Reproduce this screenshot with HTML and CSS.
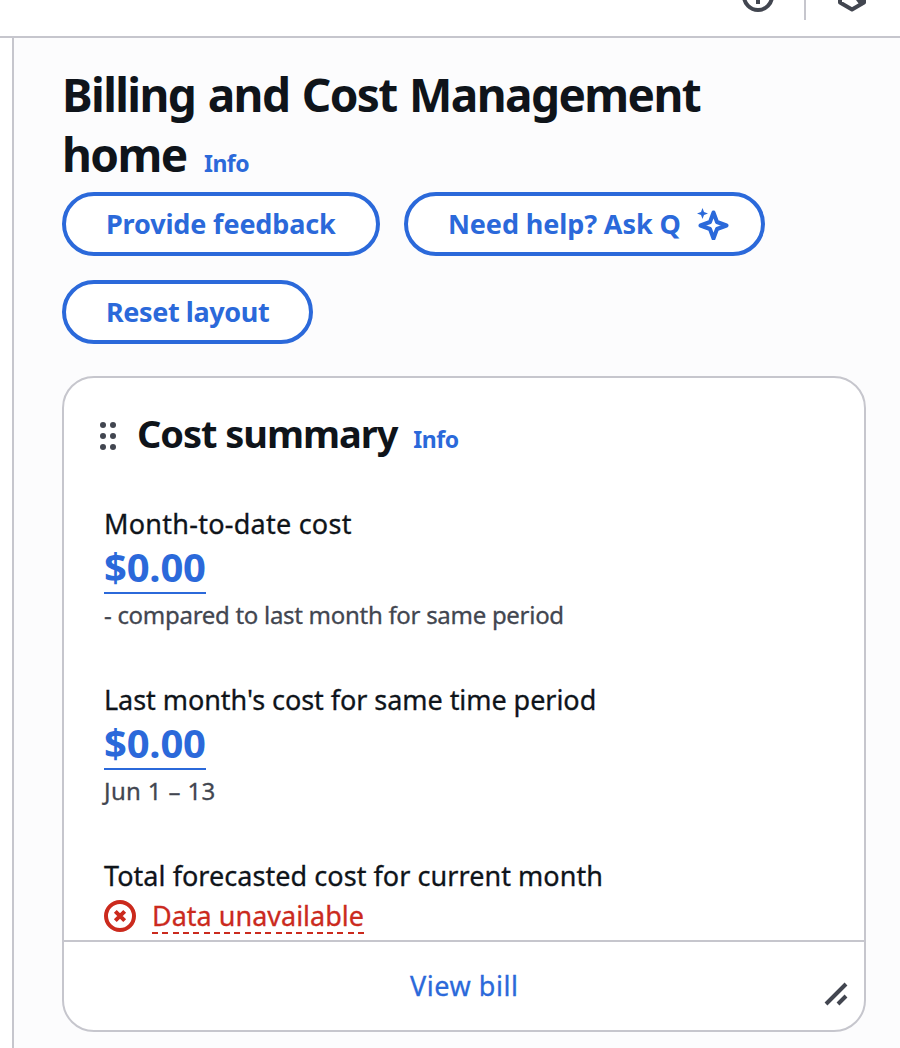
FILE: index.html
```html
<!DOCTYPE html>
<html lang="en">
<head>
<meta charset="utf-8">
<title>Billing and Cost Management</title>
<link rel="stylesheet" href="styles.css">
</head>
<body>
<header class="topbar">
  <svg class="help-icon" width="32" height="32" viewBox="0 0 32 32"><circle cx="16" cy="16" r="14" fill="none" stroke="currentColor" stroke-width="4"/><path d="M16 14v10" stroke="currentColor" stroke-width="4"/></svg>
  <span class="divider"></span>
  <svg class="settings-icon" width="32" height="32" viewBox="0 0 32 32"><path d="M16 3 4 9.500V22.500l12 7 12-7V9.500Z" fill="none" stroke="currentColor" stroke-width="4" stroke-linejoin="round"/><path d="M20 20l6-5v8l-3 1z" fill="currentColor"/></svg>
</header>
<div class="shell">
  <aside class="rail"></aside>
  <main class="content">
    <h1 class="title"><span class="title-text">Billing and Cost Management home</span> <a class="info">Info</a></h1>
    <div class="actions">
      <button class="btn feedback">Provide feedback</button>
      <button class="btn ask"><span>Need help? Ask Q</span><svg class="spark" width="32" height="32" viewBox="0 0 32 32"><path d="M16.500 4.500 20 14 29.500 17.500 20 21 16.500 30.500 13 21 3.500 17.500 13 14Z" fill="none" stroke="currentColor" stroke-width="4" stroke-linejoin="round"/><path d="M5.500 0 7 4 11 5.500 7 7 5.500 11 4 7 0 5.500 4 4Z" fill="currentColor"/></svg></button>
      <button class="btn reset">Reset layout</button>
    </div>
    <section class="card">
      <div class="card-head">
        <svg class="grip" width="16" height="28" viewBox="0 0 16 28" fill="currentColor"><circle cx="3" cy="3" r="3"/><circle cx="13" cy="3" r="3"/><circle cx="3" cy="14" r="3"/><circle cx="13" cy="14" r="3"/><circle cx="3" cy="25" r="3"/><circle cx="13" cy="25" r="3"/></svg>
        <h2 class="card-title">Cost summary</h2>
        <a class="info">Info</a>
      </div>
      <div class="metrics">
        <div class="metric">
          <div class="label month">Month-to-date cost</div>
          <a class="amount">$0.00</a>
          <div class="note compared">- compared to last month for same period</div>
        </div>
        <div class="metric">
          <div class="label last">Last month's cost for same time period</div>
          <a class="amount">$0.00</a>
          <div class="note range">Jun 1 – 13</div>
        </div>
        <div class="metric">
          <div class="label forecast">Total forecasted cost for current month</div>
          <div class="error"><svg width="32" height="32" viewBox="0 0 32 32" fill="none" stroke="currentColor" stroke-width="4"><circle cx="16" cy="16" r="14"/><path d="m11.300 11.300 9.400 9.400M20.700 11.300l-9.400 9.400"/></svg><span class="error-text">Data unavailable</span></div>
        </div>
      </div>
      <footer class="card-foot">
        <a class="view">View bill</a>
        <svg class="resize" width="24" height="24" viewBox="0 0 24 24" stroke="currentColor" stroke-width="4"><path d="M2 22 22 2M14 22l8-8"/></svg>
      </footer>
    </section>
  </main>
</div>
</body>
</html>
```
FILE: styles.css
```css
* { box-sizing: border-box; }
body { margin: 0; height: 1048px; overflow: hidden; background: #fff; color: #0f141a; font-family: "Noto Sans", "Open Sans", sans-serif; }
.topbar { display: flex; height: 38px; border-bottom: 2px solid #c6c6cd; color: #424650; overflow: hidden; padding-left: 742px; }
.help-icon { margin-top: -20px; flex: none; }
.divider { width: 2px; height: 20px; background: #c6c6cd; margin: 0 30px; flex: none; }
.settings-icon { margin-top: -20px; flex: none; }
.shell { display: flex; height: 1010px; }
.rail { width: 14px; flex: none; border-right: 2px solid #c6c6cd; }
.content { flex: 1; background: #fcfcfd; padding: 26px 34px 16px 48px; }
.title { margin: 0; max-width: 720px; height: 128px; font-size: 46px; line-height: 60px; font-weight: 700; letter-spacing: -1.6px; word-spacing: 2px; }
.info { color: #2b69da; font-size: 23px; font-weight: 700; line-height: 30px; letter-spacing: -0.5px; margin-left: 4px; word-spacing: 0; }
.title .info { margin-left: 5px; }
.actions { display: flex; flex-wrap: wrap; gap: 24px; }
.btn { height: 64px; padding: 0 0 0 40px; border: 4px solid #2b69da; border-radius: 32px; background: #fff; color: #2b69da; font: 700 27px/40px "Noto Sans", sans-serif; display: flex; align-items: center; white-space: nowrap; }
.feedback { width: 318px; letter-spacing: -0.15px; }
.ask { width: 361px; letter-spacing: -0.1px; }
.reset { width: 251px; letter-spacing: -0.4px; }
.spark { margin-left: 16px; flex: none; }
.card { margin-top: 32px; height: 656px; border: 2px solid #c6c6cd; border-radius: 32px; background: #fff; display: flex; flex-direction: column; overflow: hidden; }
.card-head { display: flex; align-items: baseline; height: 126px; padding: 31px 0 0 36px; white-space: nowrap; }
.grip { color: #424650; align-self: flex-start; margin: 13px 21px 0 0; }
.card-title { margin: 0 12px 0 0; font-size: 38px; line-height: 48px; font-weight: 700; letter-spacing: -1.05px; }
.metrics { flex: 1; padding-left: 40px; min-height: 0; white-space: nowrap; }
.metric { height: 176px; }
.label { font-size: 27px; line-height: 40px; -webkit-text-stroke: 0.3px; }
.month { letter-spacing: 0.25px; }
.last { letter-spacing: -0.05px; }
.forecast { letter-spacing: 0.05px; }
.amount { display: block; width: 102px; height: 50px; border-bottom: 2px solid #2b69da; color: #2b69da; font-size: 40px; line-height: 46px; font-weight: 700; letter-spacing: -0.2px; }
.note { color: #424650; font-size: 24px; line-height: 40px; margin-top: 1px; -webkit-text-stroke: 0.3px; }
.compared { letter-spacing: -0.29px; }
.range { letter-spacing: 0.35px; }
.error { display: flex; align-items: flex-start; color: #cb2a1d; margin-top: 4px; }
.error svg { margin-right: 16px; }
.error-text { width: 212px; height: 34px; font-size: 27px; line-height: 32px; -webkit-text-stroke: 0.3px; background: repeating-linear-gradient(90deg, #cb2a1d 0 6px, transparent 6px 10.3px) 0 100% / 100% 2px no-repeat; }
.card-foot { height: 90px; flex: none; border-top: 2px solid #c6c6cd; display: flex; align-items: center; }
.view { color: #2b69da; font-size: 27px; margin: -2px 0 0 346px; width: 112px; white-space: nowrap; letter-spacing: 0.55px; -webkit-text-stroke: 0.3px; }
.resize { color: #424650; margin: 16px 0 0 302px; }
```
